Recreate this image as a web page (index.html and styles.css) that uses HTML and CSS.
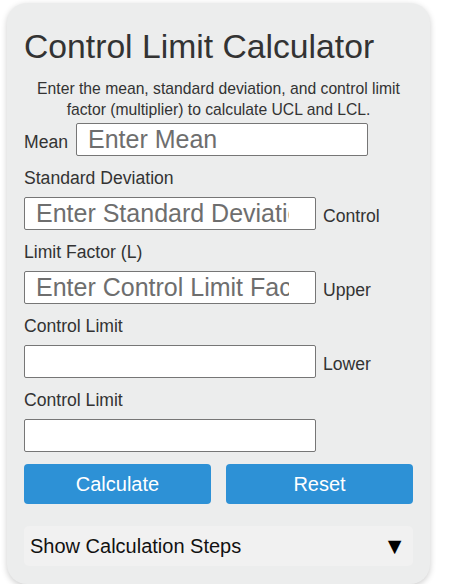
FILE: index.html
```html
<!DOCTYPE html>
<html lang="en">
<head>
  <meta charset="UTF-8">
  <meta name="viewport" content="width=device-width, initial-scale=1.0">
  <title>Control Limit Calculator</title>
  <link rel="stylesheet" href="styles.css">
</head>
<body>
  <div class="calculator">
    <h1>Control Limit Calculator</h1>
    <p class="intro">Enter the mean, standard deviation, and control limit factor (multiplier) to calculate UCL and LCL.</p>

    <div class="field-row">
      <label for="mean">Mean</label>
      <input type="number" id="mean" placeholder="Enter Mean">
    </div>
    <div class="label-row"><label for="stdDev">Standard Deviation</label></div>
    <div class="field-row">
      <input type="number" id="stdDev" placeholder="Enter Standard Deviation">
      <label for="factor">Control</label>
    </div>
    <div class="label-row"><label for="factor">Limit Factor (L)</label></div>
    <div class="field-row">
      <input type="number" id="factor" placeholder="Enter Control Limit Factor">
      <label for="ucl">Upper</label>
    </div>
    <div class="label-row"><label for="ucl">Control Limit</label></div>
    <div class="field-row">
      <input type="text" id="ucl" readonly>
      <label for="lcl">Lower</label>
    </div>
    <div class="label-row"><label for="lcl">Control Limit</label></div>
    <div class="field-row">
      <input type="text" id="lcl" readonly>
    </div>

    <div class="buttons">
      <button id="calcBtn">Calculate</button>
      <button id="resetBtn">Reset</button>
    </div>

    <div class="steps" id="stepsToggle">
      <span>Show Calculation Steps</span>
      <span class="arrow">&#9660;</span>
    </div>
  </div>
</body>
</html>
```

FILE: styles.css
```css
:root {
  --card-bg: #eceded;
  --steps-bg: #f1f1f1;
  --btn-blue: #2d91d6;
  --text-dark: #333333;
  --border: #767676;
  --font-family: 'Liberation Sans', Arial, Helvetica, sans-serif;
}
* { box-sizing: border-box; }
body {
  margin: 0;
  padding: 3px 0 0 7px;
  background: #ffffff;
  font-family: var(--font-family);
  color: var(--text-dark);
}
.calculator {
  width: 423px;
  padding: 17px 17px 18px;
  background: var(--card-bg);
  border-radius: 20px;
  box-shadow: 0 2px 6px rgba(0, 0, 0, 0.2);
}
h1 {
  margin: 7px 0 0;
  font-size: 33.7px;
  line-height: 38px;
  font-weight: normal;
}
.intro {
  margin: 13px 0 3px;
  font-size: 15.7px;
  line-height: 21px;
  text-align: center;
}
.field-row {
  display: flex;
  align-items: baseline;
  gap: 7px;
  margin-bottom: 12px;
  font-size: 17.6px;
}
.field-row label { margin-right: 1px; }
.label-row {
  font-size: 17.6px;
  line-height: 21px;
  margin-bottom: 8px;
}
.field-row input {
  width: 292px;
  height: 33px;
  padding: 0 11px;
  border: 1px solid var(--border);
  border-radius: 2px;
  background: #ffffff;
  font-family: var(--font-family);
  font-size: 25px;
  color: var(--text-dark);
}
.field-row input::placeholder { color: #6e6e6e; }
.buttons {
  display: grid;
  grid-template-columns: 1fr 1fr;
  gap: 15px;
}
.buttons button {
  height: 40px;
  border: none;
  border-radius: 4px;
  background: var(--btn-blue);
  color: #ffffff;
  font-family: var(--font-family);
  font-size: 20px;
  cursor: pointer;
}
.steps {
  display: flex;
  justify-content: space-between;
  align-items: center;
  height: 40px;
  margin-top: 22px;
  padding: 0 7px 0 6px;
  background: var(--steps-bg);
  border-radius: 5px;
  color: #111111;
  font-size: 20px;
  cursor: pointer;
}
.steps .arrow {
  font-size: 23px;
  color: #000000;
}
```
